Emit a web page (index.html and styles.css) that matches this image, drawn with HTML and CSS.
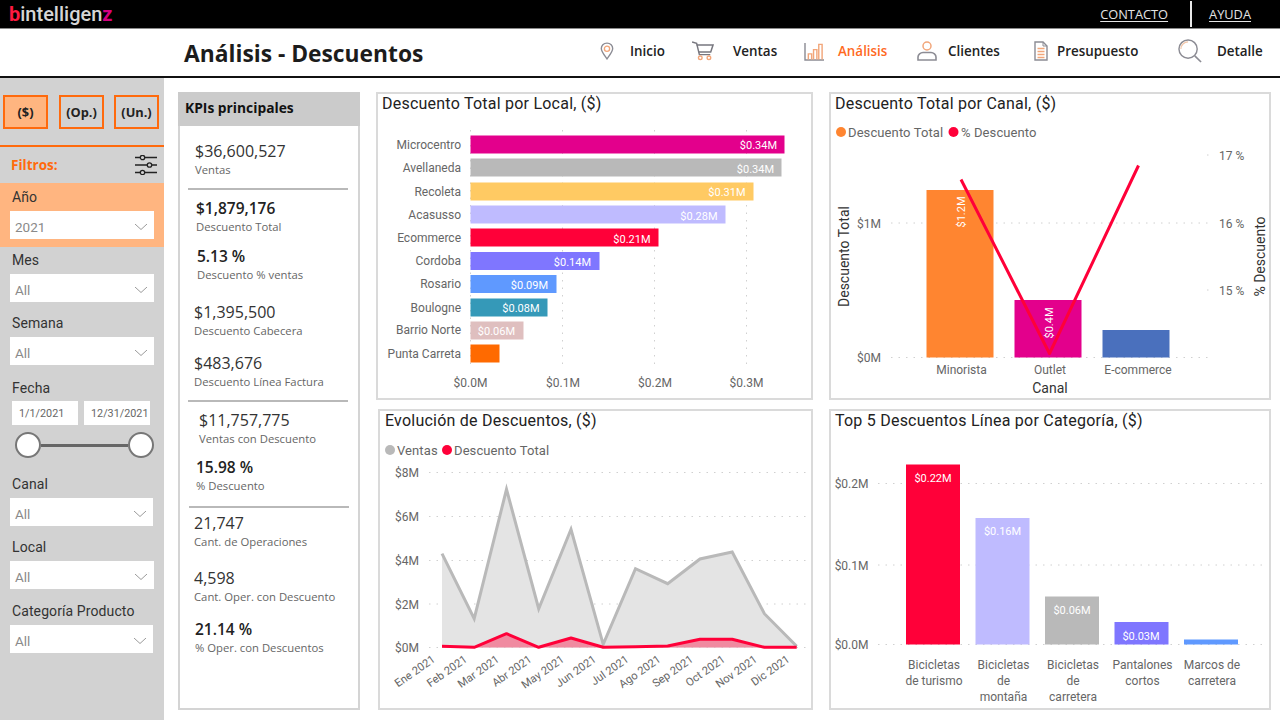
FILE: index.html
```html
<!DOCTYPE html>
<html lang="es">
<head>
<meta charset="utf-8">
<title>Análisis - Descuentos</title>
<link rel="stylesheet" href="styles.css">
</head>
<body>
<header class="topbar">
  <div class="logo"><span class="lb">b</span><span class="li">intelligen</span><span class="lz">z</span></div>
  <nav class="toplinks"><a class="contact">CONTACTO</a><i class="topsep"></i><a class="help">AYUDA</a></nav>
</header>
<div class="pagehead">
  <h1>Análisis - Descuentos</h1>
  <nav class="mainnav">
    <span class="navitem ni-inicio"><svg class="ic ic-pin" viewBox="0 0 16 20"><path d="M8 1C4 1 1.500 4 1.500 7.200 1.500 11 6 16 8 19c2-3 6.500-8 6.500-11.800C14.500 4 12 1 8 1z" fill="none" stroke="#8c8c94" stroke-width="1.600"/><circle cx="8" cy="7.500" r="3" fill="none" stroke="#f2a67a" stroke-width="1.500"/></svg><span>Inicio</span></span>
    <span class="navitem ni-ventas"><svg class="ic ic-cart" viewBox="0 0 24 22"><path d="M0 1l5 1.500 3 12.500h12" fill="none" stroke="#77777f" stroke-width="1.600"/><path d="M5 4.500h18l-2.500 7.500H7.500" fill="none" stroke="#77777f" stroke-width="1.600"/><circle cx="9" cy="18.500" r="2" fill="none" stroke="#f2a67a" stroke-width="1.500"/><circle cx="18.500" cy="18.500" r="2" fill="none" stroke="#f2a67a" stroke-width="1.500"/></svg><span>Ventas</span></span>
    <span class="navitem ni-analisis active"><svg class="ic ic-bars" viewBox="0 0 22 20"><path d="M1 1v18h20" fill="none" stroke="#8c8c94" stroke-width="1.500"/><path d="M4.500 18.500v-6h3.500v6M10 18.500V8h3.500v10.500M15.500 18.500V2.500H19v16" fill="none" stroke="#f2a67a" stroke-width="1.500"/></svg><span>Análisis</span></span>
    <span class="navitem ni-clientes"><svg class="ic ic-user" viewBox="0 0 20 20"><circle cx="10" cy="5" r="4" fill="none" stroke="#f2a67a" stroke-width="1.500"/><path d="M1 19v-3c0-2.500 2.500-4.500 5-4.500h8c2.500 0 5 2 5 4.500v3z" fill="none" stroke="#8c8c94" stroke-width="1.600"/></svg><span>Clientes</span></span>
    <span class="navitem ni-pres"><svg class="ic ic-doc" viewBox="0 0 14 20"><path d="M1 1h8l4 4v14H1z" fill="none" stroke="#8c8c94" stroke-width="1.400"/><path d="M9 1v4h4" fill="none" stroke="#8c8c94" stroke-width="1"/><path d="M3.500 7.500h7M3.500 10.500h7M3.500 13.500h7M3.500 16.500h7" fill="none" stroke="#f2a67a" stroke-width="1.400"/></svg><span>Presupuesto</span></span>
    <span class="navitem ni-detalle"><svg class="ic ic-search" viewBox="0 0 25 25"><circle cx="10.500" cy="10.500" r="9.500" fill="none" stroke="#8c8c94" stroke-width="1.500"/><path d="M3 10.500a7.500 7.500 0 0 1 7.500-7.500" fill="none" stroke="#f2c6a8" stroke-width="1.200"/><path d="M17.500 17.500l6.500 6.500" fill="none" stroke="#8c8c94" stroke-width="1.700"/></svg><span>Detalle</span></span>
  </nav>
</div>
<div class="page">
  <aside class="sidebar">
    <div class="modes"><button class="mode mode-on">($)</button><button class="mode m2">(Op.)</button><button class="mode m3">(Un.)</button></div>
    <div class="filtershead">
      <strong>Filtros:</strong>
      <svg class="filtericon" viewBox="0 0 22 20"><path d="M0 2.500h5M10 2.500h12M0 10h12M17 10h5M0 17.500h5M10 17.500h12" fill="none" stroke="#222" stroke-width="1.500"/><circle cx="7.500" cy="2.500" r="2.200" fill="none" stroke="#222" stroke-width="1.300"/><circle cx="14.500" cy="10" r="2.200" fill="none" stroke="#222" stroke-width="1.300"/><circle cx="7.500" cy="17.500" r="2.200" fill="none" stroke="#222" stroke-width="1.300"/></svg>
    </div>
    <div class="filter f-anio"><label>Año</label><div class="dd"><span>2021</span><svg class="chev" viewBox="0 0 12 6"><path d="M0 0l6 5.500L12 0" fill="none" stroke="#9a9a9a"/></svg></div></div>
    <div class="filter f-mes"><label>Mes</label><div class="dd"><span>All</span><svg class="chev" viewBox="0 0 12 6"><path d="M0 0l6 5.500L12 0" fill="none" stroke="#9a9a9a"/></svg></div></div>
    <div class="filter f-sem"><label>Semana</label><div class="dd"><span>All</span><svg class="chev" viewBox="0 0 12 6"><path d="M0 0l6 5.500L12 0" fill="none" stroke="#9a9a9a"/></svg></div></div>
    <div class="filter f-fecha">
      <label>Fecha</label>
      <div class="dates"><span class="date d1">1/1/2021</span><span class="date d2">12/31/2021</span></div>
      <div class="slider"><i class="knob"></i><i class="track"></i><i class="knob"></i></div>
    </div>
    <div class="filter f-canal"><label>Canal</label><div class="dd"><span>All</span><svg class="chev" viewBox="0 0 12 6"><path d="M0 0l6 5.500L12 0" fill="none" stroke="#9a9a9a"/></svg></div></div>
    <div class="filter f-local"><label>Local</label><div class="dd"><span>All</span><svg class="chev" viewBox="0 0 12 6"><path d="M0 0l6 5.500L12 0" fill="none" stroke="#9a9a9a"/></svg></div></div>
    <div class="filter f-cat"><label>Categoría Producto</label><div class="dd"><span>All</span><svg class="chev" viewBox="0 0 12 6"><path d="M0 0l6 5.500L12 0" fill="none" stroke="#9a9a9a"/></svg></div></div>
  </aside>
  <section class="kpis">
    <h2>KPIs principales</h2>
    <div class="kpi k1"><b>$36,600,527</b><small>Ventas</small></div>
    <hr class="r1">
    <div class="kpi k2 strong"><b>$1,879,176</b><small>Descuento Total</small></div>
    <div class="kpi k3 strong"><b>5.13 %</b><small>Descuento % ventas</small></div>
    <div class="kpi k4"><b>$1,395,500</b><small>Descuento Cabecera</small></div>
    <div class="kpi k5"><b>$483,676</b><small>Descuento Línea Factura</small></div>
    <hr class="r2">
    <div class="kpi k6"><b>$11,757,775</b><small>Ventas con Descuento</small></div>
    <div class="kpi k7 strong"><b>15.98 %</b><small>% Descuento</small></div>
    <hr class="r3">
    <div class="kpi k8"><b>21,747</b><small>Cant. de Operaciones</small></div>
    <div class="kpi k9"><b>4,598</b><small>Cant. Oper. con Descuento</small></div>
    <div class="kpi k10 strong"><b>21.14 %</b><small>% Oper. con Descuentos</small></div>
  </section>
  <main class="charts">
    <section class="card c-local">
      <h3>Descuento Total por Local, ($)</h3>
      <svg class="plot" viewBox="378 116 433 282">
        <g class="grid"><path d="M470.500 130V367M562.500 130V367M654.500 130V367M746.500 130V367"/></g>
        <g class="lab end">
          <text x="461" y="148.500">Microcentro</text><text x="461" y="172">Avellaneda</text><text x="461" y="196">Recoleta</text><text x="461" y="219">Acasusso</text><text x="461" y="242">Ecommerce</text><text x="461" y="265">Cordoba</text><text x="461" y="288">Rosario</text><text x="461" y="312">Boulogne</text><text x="461" y="334">Barrio Norte</text><text x="461" y="357.500">Punta Carreta</text>
        </g>
        <rect class="b-mag" x="470.500" y="135.500" width="314" height="18"/>
        <rect class="b-gry" x="470.500" y="158.500" width="311" height="18"/>
        <rect class="b-yel" x="470.500" y="182.500" width="283" height="18"/>
        <rect class="b-lil" x="470.500" y="205.500" width="255" height="18"/>
        <rect class="b-red" x="470.500" y="228.500" width="188" height="18"/>
        <rect class="b-vio" x="470.500" y="252" width="129" height="18"/>
        <rect class="b-blu" x="470.500" y="275" width="86" height="18"/>
        <rect class="b-tea" x="470.500" y="298.500" width="77" height="18"/>
        <rect class="b-pnk" x="470.500" y="321.500" width="53" height="18"/>
        <rect class="b-ora" x="470.500" y="344.500" width="29" height="18"/>
        <g class="val end">
          <text x="777" y="149">$0.34M</text><text x="774" y="172.500">$0.34M</text><text x="745.500" y="196">$0.31M</text><text x="717.500" y="219.500">$0.28M</text><text x="650.500" y="242.500">$0.21M</text><text x="591" y="265.500">$0.14M</text><text x="548" y="288.500">$0.09M</text><text x="539.500" y="312">$0.08M</text><text x="515" y="335">$0.06M</text>
        </g>
        <g class="lab mid">
          <text x="470.500" y="386.500">$0.0M</text><text x="563" y="386.500">$0.1M</text><text x="655" y="386.500">$0.2M</text><text x="746.500" y="386.500">$0.3M</text>
        </g>
      </svg>
    </section>
    <section class="card c-canal">
      <h3>Descuento Total por Canal, ($)</h3>
      <svg class="plot" viewBox="831 116 438 282">
        <circle class="f-ora2" cx="841" cy="132" r="5"/><text class="leg" x="848" y="136.500">Descuento Total</text>
        <circle class="f-red" cx="953.500" cy="132" r="5"/><text class="leg" x="961" y="136.500">% Descuento</text>
        <g class="grid"><path d="M891 223H1208M891 357.500H1208M1207 155h3M1207 290h3"/></g>
        <g class="lab end"><text x="881" y="227.500">$1M</text><text x="881" y="362">$0M</text></g>
        <g class="lab"><text x="1219" y="159.500">17 %</text><text x="1219" y="227.500">16 %</text><text x="1219" y="295">15 %</text></g>
        <text class="axt mid" transform="translate(849 256.500) rotate(-90)">Descuento Total</text>
        <text class="axt mid" transform="translate(1265 256.500) rotate(-90)">% Descuento</text>
        <rect class="f-ora2" x="926.500" y="190" width="67" height="167.500"/>
        <rect class="b-mag" x="1014.500" y="300" width="67" height="57.500"/>
        <rect class="f-ind" x="1102.500" y="330" width="67" height="27.500"/>
        <text class="val mid" transform="translate(965 212) rotate(-90)">$1.2M</text>
        <text class="val mid" transform="translate(1053 323) rotate(-90)">$0.4M</text>
        <polyline class="ln-red" points="961,179.500 1049.500,353.500 1138.500,165.500"/>
        <g class="lab mid"><text x="961.500" y="374">Minorista</text><text x="1050" y="374">Outlet</text><text x="1138" y="374">E-commerce</text></g>
        <text class="axt mid" x="1050" y="393">Canal</text>
      </svg>
    </section>
    <section class="card c-evo">
      <h3>Evolución de Descuentos, ($)</h3>
      <svg class="plot" viewBox="380 433 431 275">
        <circle class="f-gry" cx="390" cy="450" r="5"/><text class="leg" x="397" y="454.500">Ventas</text>
        <circle class="f-red" cx="447" cy="450" r="5"/><text class="leg" x="454" y="454.500">Descuento Total</text>
        <g class="grid"><path d="M429 472.500H809M429 516.500H809M429 560.500H809M429 604H809M429 647.500H809"/></g>
        <g class="lab end"><text x="419" y="477">$8M</text><text x="419" y="521">$6M</text><text x="419" y="565">$4M</text><text x="419" y="608.500">$2M</text><text x="419" y="652">$0M</text></g>
        <polygon class="area-gry" points="442,553.700 474.200,618.700 506.500,489.300 538.700,608.700 571,529.300 603.200,644.300 635.500,568.700 667.700,583.700 700,559 732.200,552 764.400,613.700 796.700,646.300 796.700,647.500 442,647.500"/>
        <polyline class="ln-gry" points="442,553.700 474.200,618.700 506.500,489.300 538.700,608.700 571,529.300 603.200,644.300 635.500,568.700 667.700,583.700 700,559 732.200,552 764.400,613.700 796.700,646.300"/>
        <polygon class="area-red" points="442,646.300 474.200,647.300 506.500,633.700 538.700,647.300 571,638 603.200,647.300 635.500,646.700 667.700,646 700,639.300 732.200,639.300 764.400,647.300 796.700,647.300 796.700,647.500 442,647.500"/>
        <polyline class="ln-red" points="442,646.300 474.200,647.300 506.500,633.700 538.700,647.300 571,638 603.200,647.300 635.500,646.700 667.700,646 700,639.300 732.200,639.300 764.400,647.300 796.700,647.300"/>
        <g class="lab end months">
          <text transform="translate(436 661) rotate(-35)">Ene 2021</text>
          <text transform="translate(468 661) rotate(-35)">Feb 2021</text>
          <text transform="translate(500 661) rotate(-35)">Mar 2021</text>
          <text transform="translate(532.500 661) rotate(-35)">Abr 2021</text>
          <text transform="translate(565 661) rotate(-35)">May 2021</text>
          <text transform="translate(597 661) rotate(-35)">Jun 2021</text>
          <text transform="translate(629.500 661) rotate(-35)">Jul 2021</text>
          <text transform="translate(661.500 661) rotate(-35)">Ago 2021</text>
          <text transform="translate(694 661) rotate(-35)">Sep 2021</text>
          <text transform="translate(726 661) rotate(-35)">Oct 2021</text>
          <text transform="translate(758 661) rotate(-35)">Nov 2021</text>
          <text transform="translate(790.500 661) rotate(-35)">Dic 2021</text>
        </g>
      </svg>
    </section>
    <section class="card c-top">
      <h3>Top 5 Descuentos Línea por Categoría, ($)</h3>
      <svg class="plot" viewBox="831 433 438 275">
        <g class="grid"><path d="M878 483.500H1265M878 565H1265M878 644.500H1265"/></g>
        <g class="lab end"><text x="868.500" y="488">$0.2M</text><text x="868.500" y="569.500">$0.1M</text><text x="868.500" y="649">$0.0M</text></g>
        <rect class="b-red" x="906" y="464.500" width="54" height="180"/>
        <rect class="b-lil" x="975.500" y="518" width="54" height="126.500"/>
        <rect class="b-gry" x="1045" y="596.500" width="54" height="48"/>
        <rect class="b-vio" x="1114.500" y="622" width="54" height="22.500"/>
        <rect class="b-blu" x="1184" y="639.500" width="54" height="5"/>
        <g class="val mid"><text x="933" y="482">$0.22M</text><text x="1002.500" y="535">$0.16M</text><text x="1072" y="614">$0.06M</text><text x="1141" y="640">$0.03M</text></g>
        <g class="lab mid">
          <text x="934" y="669">Bicicletas</text><text x="934" y="685">de turismo</text>
          <text x="1003.500" y="669">Bicicletas</text><text x="1003.500" y="685">de</text><text x="1003.500" y="701">montaña</text>
          <text x="1073" y="669">Bicicletas</text><text x="1073" y="685">de</text><text x="1073" y="701">carretera</text>
          <text x="1142.500" y="669">Pantalones</text><text x="1142.500" y="685">cortos</text>
          <text x="1212" y="669">Marcos de</text><text x="1212" y="685">carretera</text>
        </g>
      </svg>
    </section>
  </main>
</div>
</body>
</html>
```
FILE: styles.css
```css
* { box-sizing: border-box; }
html, body { margin: 0; padding: 0; height: 720px; overflow: hidden; background: #fff; }
body { font-family: "Open Sans", "Liberation Sans", sans-serif; color: #222; }

.topbar { height: 29px; background: #000; border-bottom: 1px solid #8a8a8a; display: flex; justify-content: space-between; align-items: center; padding: 0 29px 0 9px; }
.logo { font: 500 20px/28px "Roboto", sans-serif; letter-spacing: 0; }
.lb { color: #ff1a40; font-weight: 700; }
.li { color: #d6d6d6; }
.lz { color: #d6007f; font-weight: 700; }
.toplinks { display: flex; align-items: center; height: 28px; color: #e4e4e4; font-size: 12.800px; }
.toplinks a { text-decoration: underline; text-underline-offset: 2px; }
.topsep { width: 2px; height: 26px; background: #e8e8e8; margin: 0 17px 0 22px; }

.pagehead { height: 49px; border-bottom: 2px solid #111; display: flex; align-items: center; padding-left: 184px; }
.pagehead h1 { margin: 0; padding-top: 2px; font-size: 22.800px; font-weight: 700; line-height: 47px; color: #1c1c1c; width: 416px; flex: none; white-space: nowrap; }
.mainnav { display: flex; align-items: center; height: 47px; padding-bottom: 3px; }
.navitem { display: flex; align-items: center; font-size: 13.400px; font-weight: 600; color: #222; white-space: nowrap; flex: none; }
.ni-inicio { gap: 16px; width: 92px; }
.ni-ventas { gap: 19px; width: 112px; }
.ni-analisis { gap: 13px; width: 113px; }
.ni-clientes { gap: 11px; width: 117px; }
.ni-pres { gap: 9px; width: 144px; }
.ni-detalle { gap: 15px; }
.active { color: #ff6a1f; }
.ic { display: block; flex: none; }
.ic-pin { width: 14px; height: 18px; }
.ic-cart { width: 22px; height: 20px; }
.ic-bars { width: 21px; height: 19px; }
.ic-user { width: 20px; height: 20px; }
.ic-doc { width: 14px; height: 20px; }
.ic-search { width: 24px; height: 24px; }

.page { display: flex; height: 642px; }
.sidebar { width: 164px; flex: none; background: #d2d2d2; padding-top: 17px; }
.modes { display: flex; padding-left: 3px; height: 34px; }
.mode { width: 45px; height: 34px; border: 2px solid #ff6a0d; background: #d2d2d2; font: 700 12.800px "Open Sans", sans-serif; color: #222; padding: 0; }
.mode-on { background: #ffb580; }
.m2 { margin-left: 11px; }
.m3 { margin-left: 10px; }
.filtershead { margin-top: 16px; border-top: 2px solid #ff6a0d; height: 38px; display: flex; justify-content: space-between; align-items: center; padding: 0 7px 0 11px; }
.filtershead strong { color: #ff6a0d; font-size: 13.500px; font-weight: 700; }
.filtericon { width: 22px; height: 20px; display: block; }
.filter { padding: 0 10px; }
.filter label { display: block; height: 20px; font: 400 14px/22px "Roboto", sans-serif; letter-spacing: .1px; color: #333; padding-left: 2px; }
.dd { margin-top: 5px; height: 28px; background: #fff; display: flex; align-items: center; justify-content: space-between; padding: 3px 7px 0 5px; font: 400 13.500px "Roboto", sans-serif; color: #8a8a8a; }
.chev { width: 12px; height: 6px; display: block; }
.f-anio { background: #ffb580; padding-top: 3px; padding-bottom: 8px; height: 64px; }
.f-mes { margin-top: 2px; }
.f-sem { margin-top: 10px; }
.f-fecha { margin-top: 12px; padding: 0; }
.f-fecha label { padding-left: 12px; }
.dates { display: flex; padding-left: 12px; margin-top: 4px; gap: 6px; }
.date { height: 24px; background: #fff; font: 400 10.800px/25px "Roboto", sans-serif; color: #666; padding-left: 7px; white-space: nowrap; }
.d1 { width: 66px; }
.d2 { width: 66px; }
.slider { display: flex; align-items: center; margin: 7px 0 0 15px; width: 139px; }
.knob { width: 26px; height: 26px; border-radius: 50%; background: #fff; border: 2px solid #777; flex: none; }
.track { height: 3px; background: #666; flex: 1; }
.f-canal { margin-top: 15px; padding-right: 11px; }
.f-local { margin-top: 10px; }
.f-cat { margin-top: 11px; padding-right: 11px; }

.kpis { width: 182px; flex: none; margin: 14px 0 10px 14px; border: 2px solid #d4d4d4; background: #fff; }
.kpis h2 { margin: -2px -2px 0; height: 34px; padding: 0 0 0 7px; background: #cbcbcb; font-size: 13.800px; font-weight: 700; line-height: 32px; color: #111; }
.kpis hr { border: 0; height: 2px; background: #b9b9b9; width: 160px; margin: 10px 0 0 8px; }
.kpi { display: block; white-space: nowrap; }
.kpi b { display: block; font-weight: 400; font-size: 16px; line-height: 20px; color: #333; }
.kpi.strong b { font-weight: 600; font-size: 15.500px; color: #222; }
.kpi small { display: block; font-size: 11.300px; line-height: 17px; color: #666; }
.k1 { margin-top: 15px; padding-left: 15px; }
.k2 { margin-top: 8px; padding-left: 16px; }
.k3 { margin-top: 11px; padding-left: 17px; }
.k4 { margin-top: 19px; padding-left: 14px; }
.k5 { margin-top: 14px; padding-left: 14px; }
.k6 { margin-top: 8px; padding-left: 19px; }
.k7 { margin-top: 10px; padding-left: 16px; }
.k8 { margin-top: 5px; padding-left: 14px; }
.k9 { margin-top: 18px; padding-left: 14px; }
.k10 { margin-top: 14px; padding-left: 15px; }
.kpis hr.r3 { margin: 12px 0 0 9px; }

.charts { margin: 14px 8px 10px 16px; flex: 1; display: grid; grid-template-columns: 437px 442px; grid-template-rows: 308px 301px; column-gap: 16px; row-gap: 9px; }
.card { border: 2px solid #dadada; background: #fff; overflow: hidden; }
.card h3 { margin: 0; height: 22px; padding: 0 0 0 4px; font: 400 16px/20px "Roboto", sans-serif; letter-spacing: .23px; color: #222; white-space: nowrap; }
.plot { display: block; }
.c-local .plot { width: 433px; height: 282px; }
.c-canal .plot { width: 438px; height: 282px; }
.c-evo { margin-left: 2px; }
.c-evo h3 { padding-left: 5px; }
.c-evo .plot { width: 431px; height: 275px; }
.c-top .plot { width: 438px; height: 275px; }

text { font-family: "Roboto", "Open Sans", sans-serif; }
.lab text { font-size: 12px; fill: #666; }
.months text { font-size: 11.200px; }
.end text { text-anchor: end; }
.mid text, text.mid { text-anchor: middle; }
.val text, text.val { font-size: 11px; fill: #fff; }
.leg { font-size: 13px; fill: #666; letter-spacing: .1px; }
.axt { font-size: 14px; fill: #333; }
.grid path { fill: none; stroke: #d0d0d0; stroke-width: 1; stroke-dasharray: 1.500 6; }
.b-mag { fill: #e3008c; }
.b-gry { fill: #b9b9b9; }
.b-yel { fill: #ffca63; }
.b-lil { fill: #bfbbff; }
.b-red { fill: #ff0039; }
.b-vio { fill: #7f76ff; }
.b-blu { fill: #5f99ff; }
.b-tea { fill: #3599b8; }
.b-pnk { fill: #dfbfbf; }
.b-ora { fill: #ff6a00; }
.f-ora2 { fill: #ff8530; }
.f-red { fill: #ff0039; }
.f-gry { fill: #b9b9b9; }
.f-ind { fill: #4a70bd; }
.ln-red { fill: none; stroke: #ff0039; stroke-width: 3; stroke-linejoin: round; }
.ln-gry { fill: none; stroke: #b9b9b9; stroke-width: 3; stroke-linejoin: miter; }
.area-gry { fill: #e4e4e4; }
.area-red { fill: #f08aa0; }
```
